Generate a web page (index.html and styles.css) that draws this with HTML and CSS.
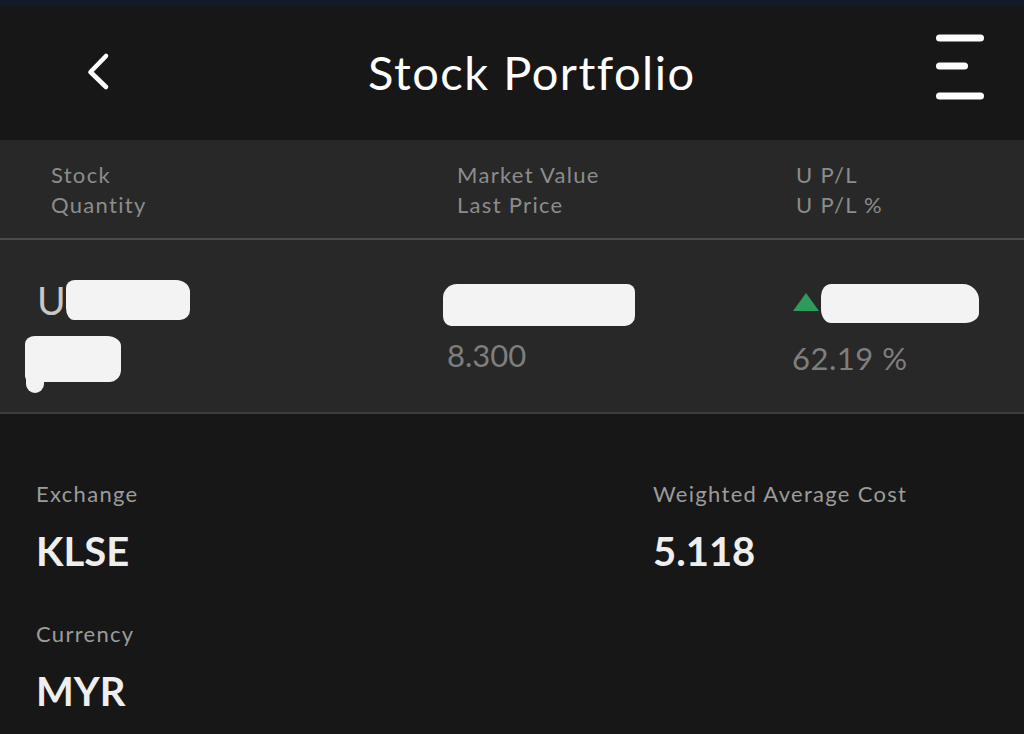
FILE: index.html
```html
<!DOCTYPE html>
<html lang="en">
<head>
<meta charset="utf-8">
<title>Stock Portfolio</title>
<link rel="stylesheet" href="styles.css">
</head>
<body>
<div class="app">
  <header class="topbar">
    <svg class="back" width="26" height="40" viewBox="0 0 26 40" aria-label="Back">
      <polyline points="21,5 5.5,21 21,36" fill="none" stroke="#ffffff" stroke-width="4.6" stroke-linecap="round" stroke-linejoin="round"/>
    </svg>
    <h1 class="title">Stock Portfolio</h1>
    <svg class="menu" width="50" height="70" viewBox="0 0 50 70" aria-label="Menu">
      <line x1="4.5" y1="6" x2="45.5" y2="6" stroke="#ffffff" stroke-width="7" stroke-linecap="round"/>
      <line x1="4.5" y1="34" x2="29.5" y2="34" stroke="#ffffff" stroke-width="7" stroke-linecap="round"/>
      <line x1="4.5" y1="64" x2="45.5" y2="64" stroke="#ffffff" stroke-width="7" stroke-linecap="round"/>
    </svg>
  </header>

  <section class="table-head">
    <div class="th"><span>Stock</span><span>Quantity</span></div>
    <div class="th"><span>Market Value</span><span>Last Price</span></div>
    <div class="th"><span>U P/L</span><span>U P/L %</span></div>
  </section>

  <section class="row">
    <div class="cell cell-stock">
      <div class="line1"><span class="sym">U</span><span class="blob blob-a"></span></div>
      <div class="blob blob-b"></div>
    </div>
    <div class="cell cell-value">
      <div class="blob blob-c"></div>
      <div class="num">8.300</div>
    </div>
    <div class="cell cell-pl">
      <div class="line1">
        <svg class="up" width="28" height="20" viewBox="0 0 28 20"><polygon points="14,1 27,19 1,19" fill="#2e9b5d"/></svg>
        <span class="blob blob-d"></span>
      </div>
      <div class="num num-pl">62.19 %</div>
    </div>
  </section>

  <section class="details">
    <div class="item">
      <div class="label">Exchange</div>
      <div class="value">KLSE</div>
    </div>
    <div class="item">
      <div class="label">Weighted Average Cost</div>
      <div class="value">5.118</div>
    </div>
    <div class="item">
      <div class="label">Currency</div>
      <div class="value">MYR</div>
    </div>
  </section>
</div>
</body>
</html>
```

FILE: styles.css
```css
* { box-sizing: border-box; }

html, body {
  margin: 0;
  padding: 0;
  background: #171717;
}

body {
  font-family: Lato, "Open Sans", "Liberation Sans", sans-serif;
  color: #ffffff;
  width: 1024px;
  height: 734px;
  overflow: hidden;
}

.app {
  display: flex;
  flex-direction: column;
}

/* Top bar */
.topbar {
  height: 140px;
  padding: 4px 39px 0 85px;
  display: flex;
  align-items: center;
  background: linear-gradient(#131a2c 0px, #141a28 3px, #161816 8px, #171717 12px);
}

.back {
  flex: none;
  margin-top: -2px;
}

.title {
  margin: 0 0 0 257px;
  font-size: 47px;
  font-weight: 400;
  line-height: 56px;
  color: #ffffff;
  letter-spacing: 1.5px;
}

.menu {
  flex: none;
  margin-left: auto;
  margin-top: -10px;
}

/* Table header */
.table-head {
  height: 100px;
  background: #282828;
  border-bottom: 2px solid #4b4b4b;
  padding: 20px 0 0 51px;
  display: grid;
  grid-template-columns: 406px 339px 1fr;
}

.th {
  display: flex;
  flex-direction: column;
  font-size: 22px;
  line-height: 30px;
  color: #8c8c8c;
  letter-spacing: 1.3px;
}

/* Data row */
.row {
  height: 174px;
  background: #282828;
  border-bottom: 2px solid #3d3d3d;
  padding: 35px 0 0 37px;
  display: grid;
  grid-template-columns: 410px 345px 1fr;
}

.cell {
  display: flex;
  flex-direction: column;
}

.line1 {
  height: 50px;
  display: flex;
  align-items: center;
}

.sym {
  font-size: 39px;
  line-height: 50px;
  color: #c8c8c8;
}

.blob {
  display: block;
  background: #f3f3f3;
  filter: blur(0.5px);
}

.blob-a {
  width: 124px;
  height: 40px;
  margin-left: 0;
  margin-top: -1px;
  border-radius: 9px 14px 10px 8px / 8px 12px 10px 12px;
}

.blob-b {
  position: relative;
  width: 96px;
  height: 46px;
  margin: 11px 0 0 -12px;
  border-radius: 10px 14px 12px 6px / 8px 10px 12px 6px;
}

.blob-b::after {
  content: "";
  position: absolute;
  left: 1px;
  bottom: -11px;
  width: 18px;
  height: 16px;
  background: #f3f3f3;
  border-radius: 0 0 9px 9px;
}

.blob-c {
  width: 192px;
  height: 42px;
  margin: 9px 0 0 -4px;
  border-radius: 14px 8px 10px 8px / 14px 8px 10px 10px;
}

.num {
  margin-top: 9px;
  font-size: 31px;
  line-height: 40px;
  color: #7e7e7e;
}

.up {
  flex: none;
  margin-top: 4px;
}

.blob-d {
  width: 158px;
  height: 39px;
  margin-left: 1px;
  margin-top: 6px;
  border-radius: 10px 16px 14px 10px / 12px 16px 10px 14px;
}

.num-pl {
  margin-top: 13px;
  font-size: 31px;
  letter-spacing: 0.5px;
}

/* Details */
.details {
  padding: 65px 0 0 36px;
  display: grid;
  grid-template-columns: 617px 1fr;
  row-gap: 43px;
}

.label {
  font-size: 22px;
  line-height: 30px;
  color: #9c9c9c;
  margin-bottom: 17px;
  letter-spacing: 1.3px;
}

.value {
  font-size: 40px;
  font-weight: 700;
  line-height: 50px;
  color: #eeeeee;
}
```
